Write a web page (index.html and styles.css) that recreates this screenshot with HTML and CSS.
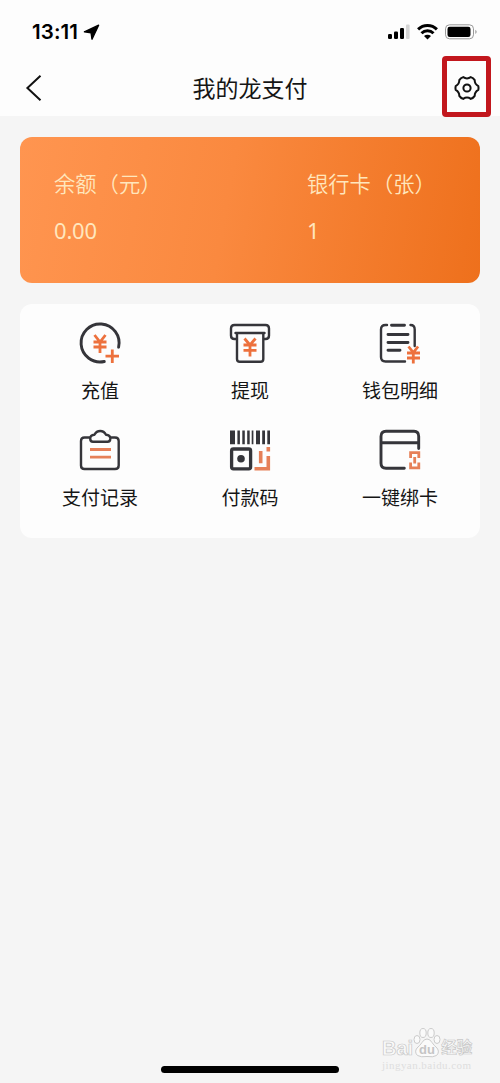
FILE: index.html
```
<!DOCTYPE html>
<html lang="zh-CN">
<head>
<meta charset="utf-8">
<title>我的龙支付</title>
<link rel="stylesheet" href="styles.css">
</head>
<body>
<div class="screen">
  <header class="top">
    <div class="status">
      <span class="time">13:11</span>
      <svg class="arrow" width="17" height="17" viewBox="0 0 17 17"><path d="M15.6 1.2 9 15.2 8.1 8.8 1.4 7.8Z" fill="#000" stroke="#000" stroke-width="1.4" stroke-linejoin="round"/></svg>
      <svg class="signals" width="92" height="20" viewBox="0 0 92 20">
        <rect x="1" y="11" width="4" height="5" rx="1.2"/><rect x="7" y="8.4" width="4" height="7.6" rx="1.2"/><rect x="13" y="5" width="4" height="11" rx="1.2"/><rect x="19" y="1.5" width="3.6" height="14.5" rx="1" fill="#d5d5d5"/>
        <g fill="none" stroke="#000" stroke-width="3"><path d="M31.1 6.3a13.5 13.5 0 0 1 18.8 0"/><path d="M34.5 10.3a8.6 8.6 0 0 1 12 0"/></g>
        <path d="M40.5 16.4 37 13.1a5 5 0 0 1 7 0Z"/>
        <rect x="58.5" y="1.8" width="28" height="14" rx="4" fill="none" stroke="#999"/>
        <rect x="60.5" y="3.8" width="23" height="10.2" rx="2.2"/>
        <path d="M88.5 6.7q2 2.1 0 4.2Z" fill="#777"/>
      </svg>
    </div>
    <nav class="nav">
      <svg class="back" width="18" height="28" viewBox="0 0 18 28"><path d="M15.5 1.8 2.4 14 15.5 26.2" fill="none" stroke="#111" stroke-width="2"/></svg>
      <h1 class="title">我的龙支付</h1>
      <div class="highlight">
        <svg width="28" height="28" viewBox="0 0 28 28" fill="none" stroke="#111" stroke-width="2" stroke-linejoin="round"><path d="M10.2 3.1Q14 5.7 17.8 3.1Q20.3 3.9 21.7 6.1Q21.6 10 25.3 12.1Q25.8 14 25.3 15.9Q21.6 18 21.7 21.9Q20.3 24.1 17.8 24.9Q14 22.3 10.2 24.9Q7.7 24.1 6.3 21.9Q6.4 18 2.7 15.9Q2.2 14 2.7 12.1Q6.4 10 6.3 6.1Q7.700 3.900 10.200 3.100Z"/><circle cx="14" cy="14" r="3.6"/></svg>
      </div>
    </nav>
  </header>
  <main class="content">
    <section class="balance">
      <div class="account"><span>余额<span class="open">（</span>元）</span><span class="amount">0.00</span></div>
      <div class="account"><span>银行卡<span class="open">（</span>张）</span><span class="amount">1</span></div>
    </section>
    <section class="menu">
      <div class="item">
        <svg class="icon" viewBox="0 0 48 48"><path class="dark" d="M28.3 42.5A19 19 0 1 1 42.6 28.2"/><path class="orange" d="M18.5 16 24 23l5.500-7M17.500 23h13M17.500 28h13M24 23v11M36.300 30.500v13.500M29.500 37.200h13.500"/></svg>
        <span>充值</span>
      </div>
      <div class="item">
        <svg class="icon" viewBox="0 0 48 48"><path class="dark thin" d="M10 20H8.500Q5 20 5 16.500V9.500Q5 6 8.500 6h31Q43 6 43 9.500v7Q43 20 39.500 20H38M9.500 14h29M11 14v26q0 2.800 2.800 2.800h20.700q2.800 0 2.800-2.800V14"/><path class="orange" d="M18.500 19.500 24 26l5.500-6.500M17.500 26h13M17.500 31.300h13M24 26v11.500"/></svg>
        <span>提现</span>
      </div>
      <div class="item">
        <svg class="icon" viewBox="0 0 48 48"><path class="dark thin" d="M11 6H9.500Q5 6 5 10.500v27.500Q5 42.500 9.500 42.500H29M34.500 6Q38.700 6 38.700 10.500V27"/><path class="dark" d="M15.500 6.200h13M12 15.500h20M12 23.500h20M12 31.300h12"/><path class="orange" d="M32.500 27.500 37.300 33.500l4.800-6M31 34h13M31 39h13M37.300 33.500v11"/></svg>
        <span>钱包明细</span>
      </div>
      <div class="item">
        <svg class="icon" viewBox="0 0 48 48"><path class="dark thin" d="M14 11.500H8.500Q5 11.500 5 15v24.500Q5 43 8.500 43h30.500Q42.700 43 42.700 39.500V15Q42.700 11.500 39 11.500H34M17 15.800h14.500Q34.300 15.800 34.300 12.500 34.300 9 30 8.700 28 5 24.200 5 20.400 5 18.400 8.700 14.200 9 14.200 12.500 14.200 15.800 17 15.800Z"/><path class="orange pale" d="M14 23.500h21M14 31.200h21"/></svg>
        <span>支付记录</span>
      </div>
      <div class="item">
        <svg class="icon" viewBox="0 0 48 48"><path fill="#35353a" d="M4 4.500h5v13.800H4ZM11.400 4.500h2.500v13.800h-2.500ZM16.300 4.500h2.500v13.800h-2.500ZM21.200 4.500h2.500v13.800h-2.500ZM25.700 4.500h1.700v13.800h-1.700ZM30 4.500h4v13.800h-4ZM36.200 4.500h2.800v13.800h-2.800ZM41.300 4.500h2.700v13.800h-2.700Z"/><rect class="dark square" x="5.600" y="23" width="19" height="19.800" rx="1.800"/><circle cx="15" cy="32.800" r="3.800" fill="#35353a"/><path class="orange pale wide" d="M34.700 25v12.300M42.300 21v4.500M42.300 30v12.800H28.500"/></svg>
        <span>付款码</span>
      </div>
      <div class="item">
        <svg class="icon" viewBox="0 0 48 48"><path class="dark" d="M28.300 42.200H10Q5 42.200 5 37.200V10.500Q5 5.300 10 5.300H38Q42.700 5.300 42.700 10.500V22.500M5 16.800h37.700"/><path class="orange pale" d="M34.600 32v-5.400h8.200V32M34.600 36.500v5.400h8.200v-5.400M38.700 31v6.600"/></svg>
        <span>一键绑卡</span>
      </div>
    </section>
  </main>
  <footer class="footer">
    <div class="watermark">
      <div class="brand">
        <span class="outlined">Bai</span>
        <svg class="paw" width="28" height="31" viewBox="0 0 28 31"><g fill="#fafafa" stroke="#cbcbcb" stroke-width="1"><ellipse cx="4" cy="12.500" rx="3" ry="4"/><ellipse cx="10" cy="6" rx="3.200" ry="4.500"/><ellipse cx="18" cy="6" rx="3.200" ry="4.500"/><ellipse cx="24" cy="12.500" rx="3" ry="4"/><path d="M14 12q3 0 5 3.500 2 3 5 5.500 3 4-.5 7.500-3.500 2-9.500 1-6 1-9.500-1Q1 25 4 21q3-2.500 5-5.500 2-3.500 5-3.500Z"/></g><text x="14" y="26.500" text-anchor="middle">du</text></svg>
        <span class="outlined chinese">经验</span>
      </div>
      <span class="address">jingyan.baidu.com</span>
    </div>
    <div class="home"></div>
  </footer>
</div>
</body>
</html>
```
FILE: styles.css
```
body { margin: 0; background: #f5f5f5; font-family: "Noto Sans CJK SC", sans-serif; color: #151515; }
.screen { width: 500px; height: 1083px; display: flex; flex-direction: column; overflow: hidden; }
.top { height: 116px; background: #fdfdfd; }
.status { height: 56px; padding: 0 20px 0 32px; box-sizing: border-box; display: flex; align-items: flex-start; }
.time { width: 46px; margin-top: 20px; font: 600 20.5px/24px Inter, sans-serif; letter-spacing: .1px; color: #000; white-space: nowrap; }
.arrow { margin: 24px 0 0 5px; }
.signals { margin: 23px 1px 0 auto; }
.nav { height: 62px; display: grid; grid-template-columns: 60px 1fr 60px; align-items: center; }
.back { margin: 2px 0 0 25px; }
.title { margin: -1px 0 0; font-size: 23px; font-weight: 400; line-height: 34px; text-align: center; }
.highlight { width: 49px; height: 61px; margin: -1px 0 0 2px; box-sizing: border-box; border: 5.5px solid #c2171d; border-radius: 4px; display: flex; align-items: center; justify-content: center; }
.highlight svg { margin-top: 3px; flex: none; }
.content { padding: 21px 20px 0; display: flex; flex-direction: column; gap: 21px; }
.balance { height: 146px; padding: 30px 34px 0; box-sizing: border-box; border-radius: 12px; background: linear-gradient(100deg, #ff9550 0%, #fa893f 45%, #ee701c 100%); display: grid; grid-template-columns: 253px 1fr; color: #ffe6bd; }
.account { display: flex; flex-direction: column; gap: 15px; font-size: 21.3px; line-height: 32px; white-space: nowrap; font-weight: 350; }
.open { margin-left: 1px; }
.amount { font: 400 22px/32px "Noto Sans", sans-serif; letter-spacing: -.2px; }
.menu { height: 234px; padding: 15px 5px 0; box-sizing: border-box; border-radius: 12px; background: #fdfdfd; display: grid; grid-template-columns: repeat(3, 150px); grid-auto-rows: 107px; }
.item { display: flex; flex-direction: column; align-items: center; gap: 9px; font-size: 19px; line-height: 28px; }
.icon { width: 48px; height: 48px; }
.dark { fill: none; stroke: #35353a; stroke-width: 2.9; stroke-linecap: round; stroke-linejoin: round; }
.thin { stroke-width: 2.4; }
.square { stroke-width: 3.3; }
.orange { fill: none; stroke: #ed713d; stroke-width: 2.8; }
.pale { stroke: #e68058; }
.wide { stroke-width: 3.6; }
.footer { margin-top: auto; display: flex; flex-direction: column; }
.watermark { align-self: flex-end; width: 118px; height: 44px; display: flex; flex-direction: column; }
.brand { height: 31px; display: flex; align-items: flex-end; }
.outlined { font: 700 20px/19px "Liberation Sans", sans-serif; color: #fafafa; -webkit-text-stroke: .7px #c8c8c8; }
.chinese { font: 700 15.5px/23px "Noto Sans CJK SC", sans-serif; }
.paw text { font: 700 13px "Liberation Sans", sans-serif; fill: #c5c5c5; }
.address { margin-top: 1px; font: 11px/13px "Liberation Serif", serif; color: #dedede; letter-spacing: .45px; }
.home { width: 178px; height: 7px; margin: -5px auto 10px 161px; border-radius: 4px; background: #000; }
```
